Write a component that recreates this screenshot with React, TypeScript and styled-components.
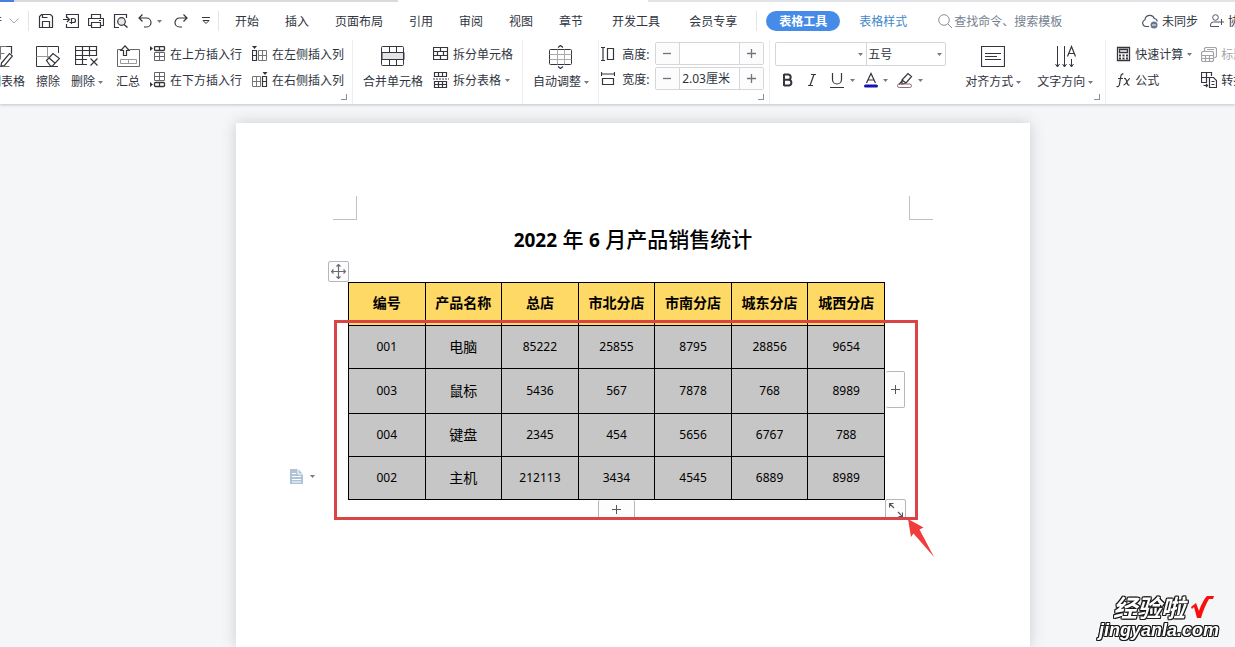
import React from "react";
import styled, { createGlobalStyle, css } from "styled-components";

const ink = "#34353d";
const line = "#d4d6da";
const red = "#db4446";

const GlobalStyle = createGlobalStyle`
  *, *::before, *::after { box-sizing: border-box; }
  html, body { margin: 0; }
  body {
    font-family: "Noto Sans", "Noto Sans CJK SC", sans-serif;
    font-size: 12px;
    line-height: 20px;
    color: #2f3440;
    background: #f5f6f8;
  }
  button, input, select { font: inherit; color: inherit; margin: 0; }
  button {
    padding: 0;
    border: 0;
    background: none;
    cursor: pointer;
  }
  svg { display: block; flex: none; }
`;

const Shell = styled.div`
  display: flex;
  flex-direction: column;
  height: 100vh;
  overflow: hidden;
`;

/* ---------- top chrome ---------- */

const Header = styled.header`
  position: relative;
  z-index: 1;
  flex: none;
  background: #fff;
  box-shadow: 0 1px 3px rgba(60, 64, 72, 0.28);
`;

const TabStrip = styled.div`
  display: flex;
  height: 2px;
`;

const StripPart = styled.span<{ $tone: string; $width?: number }>`
  background: ${(p) => p.$tone};
  ${(p) => (p.$width ? `flex: 0 0 ${p.$width}px;` : "flex: 1;")}
`;

const MenuBar = styled.nav`
  display: flex;
  align-items: center;
  height: 38px;
  white-space: nowrap;
  overflow: hidden;
`;

const MenuSection = styled.div<{ $gap: number; $left?: number; $right?: number }>`
  display: flex;
  flex: none;
  align-items: center;
  gap: ${(p) => p.$gap}px;
  padding: 0 ${(p) => p.$right ?? 0}px 0 ${(p) => p.$left ?? 0}px;
`;

const Rule = styled.span`
  flex: none;
  width: 1px;
  height: 20px;
  background: #e2e4e8;
`;

const FileMenu = styled.button`
  display: flex;
  justify-content: flex-end;
  align-items: center;
  gap: 7px;
  width: 19px;
  overflow: hidden;
  flex: none;
`;

const IconButton = styled.button`
  display: flex;
  align-items: center;
  gap: 5px;
  flex: none;
`;

const MenuItem = styled.button<{ $accent?: boolean }>`
  padding-top: 2px;
  color: ${(p) => (p.$accent ? "#3f87c9" : "#2f3440")};
`;

const ActiveItem = styled.button`
  height: 20px;
  width: 74px;
  padding-top: 1px;
  border-radius: 10px;
  background: #478be8;
  color: #fff;
  font-weight: 700;
  line-height: 19px;
`;

const Search = styled.label`
  display: flex;
  flex: 1;
  align-items: center;
  gap: 2px;
  padding-left: 31px;
`;

const SearchInput = styled.input`
  flex: 1;
  min-width: 0;
  padding: 2px 0 0;
  border: 0;
  outline: 0;
  background: none;
  &::placeholder { color: #75808f; opacity: 1; }
`;

const Account = styled.div`
  display: flex;
  flex: none;
  gap: 12px;
  width: 93px;
  overflow: hidden;
`;

const AccountButton = styled.button`
  display: flex;
  flex: none;
  align-items: center;
  gap: 4px;
  padding-top: 2px;
  svg { margin-bottom: 2px; }
`;

/* ---------- ribbon ---------- */

const Ribbon = styled.div`
  display: flex;
  height: 64px;
  overflow: hidden;
  white-space: nowrap;
`;

const Group = styled.section<{ $gap?: number; $left?: number; $right?: number; $open?: boolean }>`
  position: relative;
  display: flex;
  flex: none;
  align-items: flex-start;
  gap: ${(p) => p.$gap ?? 10}px;
  padding: 2px ${(p) => p.$right ?? 0}px 0 ${(p) => p.$left ?? 0}px;
  ${(p) => !p.$open && css`border-right: 1px solid #eceef1;`}
`;

const Launcher = styled.button`
  position: absolute;
  right: 5px;
  bottom: 4px;
  width: 6px;
  height: 6px;
  border: solid #8b8f98;
  border-width: 0 1px 1px 0;
`;

const TallButton = styled.button`
  display: flex;
  flex: none;
  flex-direction: column;
  align-items: center;
  gap: 3px;
  padding-top: 3px;
`;

const ClipLeft = styled.div`
  display: flex;
  justify-content: flex-end;
  width: 25px;
  overflow: hidden;
`;

const Label = styled.span`
  display: flex;
  align-items: center;
  gap: 3px;
`;

const Stack = styled.div`
  display: flex;
  flex: none;
  flex-direction: column;
`;

const RowButton = styled.button<{ $muted?: boolean }>`
  display: flex;
  align-items: center;
  gap: 4px;
  height: 26px;
  opacity: ${(p) => (p.$muted ? 0.45 : 1)};
  svg { margin-bottom: 2px; }
`;

const SizeGrid = styled.div`
  display: flex;
  flex-direction: column;
  gap: 2px;
`;

const SizeRow = styled.div`
  display: flex;
  align-items: center;
`;

const SizeLabel = styled.label`
  display: flex;
  align-items: center;
  gap: 7px;
  width: 54px;
  padding-top: 2px;
  svg { margin-bottom: 2px; }
`;

const Stepper = styled.div`
  display: flex;
  width: 109px;
  height: 23px;
  border: 1px solid ${line};
  border-radius: 2px;
`;

const StepButton = styled.button`
  display: grid;
  place-items: center;
  width: 23px;
  background: #fcfcfd;
`;

const StepInput = styled.input`
  flex: 1;
  min-width: 0;
  padding: 0 2px;
  border: solid ${line};
  border-width: 0 1px;
  outline: 0;
  background: #fff;
`;

const FontTools = styled.div`
  display: flex;
  flex-direction: column;
  gap: 4px;
  padding-right: 3px;
`;

const SelectRow = styled.div`
  display: flex;
  border: 1px solid ${line};
  border-radius: 2px;
`;

const SelectBox = styled.div<{ $width: number; $divided?: boolean }>`
  position: relative;
  width: ${(p) => p.$width}px;
  ${(p) => p.$divided && css`border-left: 1px solid ${line};`}
  svg {
    position: absolute;
    right: 3px;
    top: 10px;
    pointer-events: none;
  }
`;

const Select = styled.select`
  appearance: none;
  display: block;
  width: 100%;
  height: 22px;
  padding: 2px 12px 0 1px;
  border: 0;
  outline: 0;
  background: none;
`;

const FormatRow = styled.div`
  display: flex;
  align-items: center;
  gap: 9px;
  height: 20px;
  padding-left: 6px;
`;

const FormatLetter = styled.button`
  width: 15px;
  height: 20px;
`;

/* ---------- document ---------- */

const Workspace = styled.main`
  display: flex;
  flex: 1;
  justify-content: center;
  min-height: 0;
  padding: 19px 0 0 31px;
`;

const Paper = styled.article`
  width: 794px;
  flex: none;
  padding-top: 73px;
  background: #fff;
  box-shadow: 0 0 14px rgba(60, 66, 76, 0.22);
`;

const Margins = styled.div`
  display: flex;
  justify-content: space-between;
  padding: 0 97px;
`;

const MarginMark = styled.span<{ $side: "left" | "right" }>`
  width: 24px;
  height: 24px;
  border-bottom: 1px solid #bfc1c5;
  border-${(p) => (p.$side === "left" ? "right" : "left")}: 1px solid #bfc1c5;
`;

const Title = styled.h1`
  margin: 0 0 23px;
  font-size: 21px;
  line-height: 38px;
  font-weight: 500;
  text-align: center;
  color: #000;
`;

const Digits = styled.span`
  font-size: 19px;
  font-weight: 700;
`;

const TableFrame = styled.div`
  position: relative;
  width: 537px;
  margin-left: 112px;
`;

const Table = styled.table`
  width: 100%;
  table-layout: fixed;
  border-collapse: collapse;
  color: #000;
  text-align: center;
`;

const Row = styled.tr<{ $height: number }>`
  height: ${(p) => p.$height}px;
`;

const HeadCell = styled.th`
  padding: 0 0 2px;
  border: 1px solid #000;
  background: #ffd966;
  font-size: 14px;
  font-weight: 700;
`;

const Cell = styled.td<{ $text?: boolean }>`
  padding: 0;
  border: 1px solid #000;
  background: #c6c6c6;
  font-size: ${(p) => (p.$text ? 14 : 12)}px;
`;

const Floating = styled.button<{ $x: number; $y: number; $w: number; $h: number; $edge?: string }>`
  position: absolute;
  left: ${(p) => p.$x}px;
  top: ${(p) => p.$y}px;
  display: grid;
  place-items: center;
  width: ${(p) => p.$w}px;
  height: ${(p) => p.$h}px;
  border: solid #b4b7bc;
  border-width: ${(p) => p.$edge ?? "1px"};
  border-radius: 2px;
  background: #fdfdfd;
`;

const PasteHint = styled.button`
  position: absolute;
  left: -58px;
  top: 187px;
  display: flex;
  align-items: center;
  gap: 6px;
`;

const Highlight = styled.div`
  position: absolute;
  left: -14px;
  top: 38px;
  width: 584px;
  height: 200px;
  border: 3px solid ${red};
  pointer-events: none;
`;

const Pointer = styled.svg`
  position: absolute;
  left: 559px;
  top: 236px;
  pointer-events: none;
`;

const Watermark = styled.aside`
  position: fixed;
  right: 16px;
  bottom: 6px;
  z-index: 2;
  display: flex;
  flex-direction: column;
  align-items: flex-end;
  color: #fff;
  font-style: italic;
  font-weight: 700;
  text-shadow:
    1px 0 #1a1a1a, -1px 0 #1a1a1a, 0 1px #1a1a1a, 0 -1px #1a1a1a,
    1px 1px #1a1a1a, -1px -1px #1a1a1a, 1px -1px #1a1a1a, -1px 1px #1a1a1a;
`;

const MarkName = styled.div`
  display: flex;
  align-items: center;
  gap: 5px;
  padding-right: 5px;
  font-family: "Noto Sans CJK SC", sans-serif;
  font-size: 24px;
  line-height: 22px;
`;

const MarkSite = styled.div`
  font-family: "Liberation Sans", sans-serif;
  font-size: 18px;
  line-height: 22px;
`;

/* ---------- icons ---------- */

type IconProps = { w?: number; h?: number; color?: string; children: React.ReactNode };

const Icon = ({ w = 16, h = 16, color = ink, children }: IconProps) => (
  <svg width={w} height={h} viewBox={`0 0 ${w} ${h}`} fill="none" stroke={color} strokeWidth={1} aria-hidden="true">
    {children}
  </svg>
);

const Caret = () => (
  <svg width="5" height="3" viewBox="0 0 5 3" aria-hidden="true">
    <path d="M0 0h5L2.5 3z" fill="#777b84" />
  </svg>
);

const SaveIcon = () => (
  <Icon>
    <path d="M2.5 14.5h-1v-11l2-2h9l2 2v11h-12M4.500 14.500v-6h7v6M4.500 1.500v3h5" strokeWidth={1.200} />
  </Icon>
);
const ExportIcon = () => (
  <Icon>
    <path d="M3.500 5V1.500h12v13h-12V11M0 6.500h6M4 4l2.500 2.500L4 9M8.500 11V5.500h2a2 2 0 0 1 0 4h-4" strokeWidth={1.200} />
  </Icon>
);
const PrintIcon = () => (
  <Icon>
    <path d="M3.500 5.500v-4h9v4M3.500 12.500h-3v-7h15v7h-3M3.500 9.500h9v5h-9zM11 7.500h2" strokeWidth={1.200} />
  </Icon>
);
const PreviewIcon = () => (
  <Icon>
    <path d="M6 14.500H1.500v-13h12V5" strokeWidth={1.200} />
    <circle cx="8.500" cy="8.500" r="3.800" fill="#e6e8ea" strokeWidth={1.200} />
    <path d="M11 11.500l3.500 3" strokeWidth={1.500} />
  </Icon>
);
const UndoIcon = () => (
  <Icon w={14}>
    <path d="M4.500 1.500L1 5l3.500 3.500M1 5h7.500a4.500 4.500 0 0 1 0 9H6" strokeWidth={1.200} />
  </Icon>
);
const RedoIcon = () => (
  <Icon w={14}>
    <path d="M9.500 1.500L13 5 9.500 8.500M13 5H5.500a4.500 4.500 0 0 0 0 9H8" strokeWidth={1.200} />
  </Icon>
);
const MoreIcon = () => (
  <Icon w={8} h={8}>
    <path d="M0 .5h8M1 3.500h6L4 6.500z" />
  </Icon>
);
const SearchIcon = () => (
  <Icon w={14} h={14} color="#8a8e97">
    <circle cx="6" cy="6" r="5.300" />
    <path d="M10 10l4 4" />
  </Icon>
);
const CloudIcon = () => (
  <Icon color="#4d5564">
    <path d="M7 13.500H4A3.500 3.500 0 0 1 3 6.700 4.800 4.800 0 0 1 12.300 5.500 3.500 3.500 0 0 1 15.300 8.500" strokeWidth={1.200} />
    <circle cx="12" cy="12" r="3.500" fill="#68758c" stroke="none" />
    <path d="M10 12h4" stroke="#fff" />
  </Icon>
);
const InviteIcon = () => (
  <Icon w={14} h={14} color="#4d5564">
    <circle cx="5.500" cy="3.500" r="2.800" />
    <path d="M9 12.500H.5V11a3 3 0 0 1 3-3h4a3 3 0 0 1 1.500.5M11.500 5v6M8.500 8h5.500" />
  </Icon>
);

const DrawTableIcon = () => (
  <Icon w={24} h={24}>
    <path d="M.5 1.500h22v7M.5 8.500h15M11.500 1.500v13M.5 21.500h20" stroke="#777" />
    <path d="M22.500 8.500v-7h-5M12.500 18l8-9.500 3 2.500-8 9.500-3.500.5z" strokeWidth={1.200} />
  </Icon>
);
const EraseIcon = () => (
  <Icon w={24} h={24}>
    <path d="M22.500 8V1.500H.5v20H13" />
    <path d="M.5 11.500H13M11.500 1.500V13" stroke="#999" />
    <path d="M10.500 15.500l6.500-7 6.500 5-7 7.500h-2zM13 13l6.500 5.500" strokeWidth={1.200} />
    <path d="M13 21.500h9" />
  </Icon>
);
const DeleteIcon = () => (
  <Icon w={24} h={24}>
    <path d="M12 19.500H.5v-18h21v9H.5M7.500 1.500v18M14.500 1.500v10M.5 5.500h21M.5 14.500H12" strokeWidth={1.200} />
    <path d="M15.500 13.500l7 7M22.500 13.500l-7 7" strokeWidth={1.200} />
  </Icon>
);
const SumIcon = () => (
  <Icon w={24} h={24}>
    <path d="M5.500 4.500h-4v17h22v-17h-10" stroke="#666" />
    <path d="M9 .8L4.800 5.500h2.700v5h3v-5h2.700z" strokeWidth={1.200} />
    <path d="M4.500 14.500h16v4h-16zM12.500 14.500v4" stroke="#999" />
  </Icon>
);
const RowAboveIcon = () => (
  <Icon>
    <path d="M0 0l3 2.500L0 5z" fill={ink} stroke="none" />
    <rect x="4.500" y=".5" width="10" height="4" rx="1" strokeWidth={1.300} />
    <path d="M9.500.5v4" strokeWidth={1.200} />
    <path d="M4.500 6.500h10v8h-10zM9.500 6.500v8M4.500 10.500h10" stroke="#666" />
  </Icon>
);
const RowBelowIcon = () => (
  <Icon>
    <path d="M0 10l3 2.500L0 15z" fill={ink} stroke="none" />
    <rect x="4.500" y="10.500" width="10" height="4" rx="1" strokeWidth={1.300} />
    <path d="M9.500 10.500v4" strokeWidth={1.200} />
    <path d="M4.500.5h10v8h-10zM9.500.5v8M4.500 4.500h10" stroke="#666" />
  </Icon>
);
const ColLeftIcon = () => (
  <Icon>
    <path d="M0 0h5L2.500 3z" fill={ink} stroke="none" />
    <path d="M.5 4.500h4v10h-4zM.5 9.500h4" strokeWidth={1.200} />
    <path d="M6.500 4.500h8v10h-8zM10.500 4.500v10M6.500 9.500h8" stroke="#777" />
  </Icon>
);
const ColRightIcon = () => (
  <Icon>
    <path d="M10.500 0h5L13 3z" fill={ink} stroke="none" />
    <path d="M10.500 4.500h4v10h-4zM10.500 9.500h4" strokeWidth={1.200} />
    <path d="M.5 4.500h8v10h-8zM4.500 4.500v10M.5 9.500h8" stroke="#777" />
  </Icon>
);
const MergeIcon = () => (
  <Icon w={24} h={24}>
    <path d="M1 7.500h22v7H1z" fill="#e3e4e6" />
    <rect x=".5" y="1.500" width="22" height="19" rx="1" />
    <path d="M8.500 1.500v6M15.500 1.500v6M8.500 14.500v6M15.500 14.500v6" />
  </Icon>
);
const SplitCellsIcon = () => (
  <Icon>
    <path d="M.5 1.500h14v12H.5zM.5 5.500h14M.5 9.500h14M7.500 1.500v4M4.500 5.500v4M10.500 5.500v4M7.500 9.500v4" strokeWidth={1.200} />
  </Icon>
);
const SplitTableIcon = () => (
  <Icon>
    <path d="M1.500 4.500v-4h12v4zM5.500.5v4M9.500.5v4M1.500 15.500v-6h12v6zM1.500 12.500h12M5.500 9.500v6M9.500 9.500v6" strokeWidth={1.200} />
    <path d="M0 7h16" strokeDasharray="2 1" />
  </Icon>
);
const AutoFitIcon = () => (
  <Icon w={24} h={24}>
    <rect x=".5" y="4.500" width="22" height="15" rx="1" />
    <path d="M.5 9.500h22M.5 14.500h22M8.500 4.500v15M15.500 4.500v15" stroke="#aaa" />
    <path d="M9 2.500L11.500.5 14 2.500M9 21.500l2.500 2 2.500-2" strokeWidth={1.200} />
  </Icon>
);
const HeightIcon = () => (
  <Icon w={14}>
    <path d="M0 1.500h4M0 14.500h4M2 1.500v13M6.500 2.500h6v11h-6z" strokeWidth={1.200} />
  </Icon>
);
const WidthIcon = () => (
  <Icon w={14}>
    <path d="M.5 1v4M13.500 1v4M.5 3h13M1.500 7.500h11v6h-11z" strokeWidth={1.200} />
  </Icon>
);
const MinusIcon = () => (
  <Icon w={9} h={9} color="#70747c">
    <path d="M0 4.500h8" strokeWidth={1.300} />
  </Icon>
);
const PlusIcon = () => (
  <Icon w={9} h={9} color="#70747c">
    <path d="M0 4.500h9M4.500 0v9" strokeWidth={1.300} />
  </Icon>
);
const BoldIcon = () => (
  <Icon w={14}>
    <path d="M3 2v12M3 2.500h4.500a2.700 2.700 0 0 1 0 5.300H3M3 7.800h5a2.900 2.900 0 0 1 0 5.700H3" strokeWidth={2} />
  </Icon>
);
const ItalicIcon = () => (
  <Icon w={14}>
    <path d="M6 2.500h5M3 13.500h5M9 2.500l-4 11" strokeWidth={1.200} />
  </Icon>
);
const UnderlineIcon = () => (
  <Icon>
    <path d="M3.500 1v6.500a4.500 4.500 0 0 0 9 0V1M1 15.500h14" strokeWidth={1.200} />
  </Icon>
);
const FontColorIcon = () => (
  <Icon w={14}>
    <path d="M2.500 11L7 1.500 11.500 11M4 8h6" strokeWidth={1.200} />
    <path d="M1.500 14h11" stroke="#1414b4" strokeWidth={3} strokeLinecap="round" />
  </Icon>
);
const MarkerIcon = () => (
  <Icon>
    <path d="M5 8l6-6.500 3.500 3L9 11l-4 1zM5 8l4 3M5 9l-3 3.500" strokeWidth={1.200} />
    <rect x=".5" y="12" width="14" height="3.500" rx="1.700" stroke="#8a6f72" />
  </Icon>
);
const AlignIcon = () => (
  <Icon w={24} h={24}>
    <path d="M.5 1.500h23v20H.5z" strokeWidth={1.200} />
    <path d="M4 8.500h16M4 11.500h12M4 14.500h16" />
  </Icon>
);
const DirectionIcon = () => (
  <Icon w={24} h={24}>
    <path d="M4.500 1v20M11.500 1v20M18.500 14v7M2.500 19l2 3 2-3M9.500 19l2 3 2-3M16.500 19l2 3 2-3" />
    <path d="M14.500 11.500l4-10 4 10M16 8.500h5" strokeWidth={1.200} />
  </Icon>
);
const CalculatorIcon = () => (
  <Icon w={15}>
    <path d="M1.500 1.500h12v13h-12zM3.500 3.500h8v3h-8z" strokeWidth={1.300} />
    <path d="M3 9.500h9M3 12.500h9" strokeWidth={2} strokeDasharray="2 1.500" />
  </Icon>
);
const FormulaIcon = () => (
  <Icon w={15}>
    <path d="M7.500 2C5.500 1.500 5 3 4.700 5L3.500 12c-.3 2-1 3-3 2.500M2 6.500h5M8 6.500c2-.5 2.500 2 3 4s1 3 2.500 2.500M14 6.500c-2 0-4 6.500-6.500 6.500" strokeWidth={1.200} />
  </Icon>
);
const TitleRowIcon = () => (
  <Icon>
    <path d="M3.500 5.500v-3l1-1h10l1 1v8l-1 1h-1M1.500 5.500h10l1 1v8l-1 1h-10l-1-1v-8zM.5 9.500h12M.5 12.500h12M4.500 9.500v6M8.500 9.500v6M6 3.500h7" strokeWidth={1.200} />
  </Icon>
);
const ConvertIcon = () => (
  <Icon>
    <path d="M6 10.500H.5v-10h10V4M.5 5.500H8M5.500.5v10M8.500 5.500h4l3 3v7h-7zM10.500 9.500h3M10.500 12.500h3M2.500 13.500h4M5 12l1.500 1.500L5 15" strokeWidth={1.200} />
  </Icon>
);
const MoveIcon = () => (
  <Icon w={15} h={15} color="#6a6d73">
    <path d="M7.500 .5v14M.5 7.500h14M5.500 2.500l2-2 2 2M5.500 12.500l2 2 2-2M2.500 5.500l-2 2 2 2M12.500 5.500l2 2-2 2" strokeWidth={1.200} />
  </Icon>
);
const ThinPlus = () => (
  <Icon w={9} h={9} color="#54575c">
    <path d="M0 4.500h9M4.500 0v9" />
  </Icon>
);
const ResizeIcon = () => (
  <Icon w={14} h={14} color="#54575c">
    <path d="M.5 4.500v-4h4M.5.5l4.500 4.500M13.500 9.500v4h-4M13.500 13.500L9 9" strokeWidth={1.200} />
  </Icon>
);
const NoteIcon = () => (
  <svg width="14" height="15" viewBox="0 0 14 15" aria-hidden="true">
    <path d="M0 0h8l5 5v10H0z" fill="#afc3d8" />
    <path d="M8 0v5h5M2 4.500h4M2 7.500h9M2 10.500h9M2 13h9" stroke="#fff" fill="none" />
  </svg>
);

/* ---------- data ---------- */

const mainMenu = ["开始", "插入", "页面布局", "引用", "审阅", "视图", "章节"];
const extraMenu = ["开发工具", "会员专享"];
const columns = ["编号", "产品名称", "总店", "市北分店", "市南分店", "城东分店", "城西分店"];
const rows = [
  { height: 43, cells: ["001", "电脑", "85222", "25855", "8795", "28856", "9654"] },
  { height: 45, cells: ["003", "鼠标", "5436", "567", "7878", "768", "8989"] },
  { height: 43, cells: ["004", "键盘", "2345", "454", "5656", "6767", "788"] },
  { height: 43, cells: ["002", "主机", "212113", "3434", "4545", "6889", "8989"] },
];

type TallProps = { icon: React.ReactNode; text: string; menu?: boolean };

const Tall = ({ icon, text, menu }: TallProps) => (
  <TallButton>
    {icon}
    <Label>
      {text}
      {menu && <Caret />}
    </Label>
  </TallButton>
);

type SizeFieldProps = { id: string; icon: React.ReactNode; label: string; value: string };

const SizeField = ({ id, icon, label, value }: SizeFieldProps) => (
  <SizeRow>
    <SizeLabel htmlFor={id}>
      {icon}
      {label}
    </SizeLabel>
    <Stepper>
      <StepButton aria-label={`${label} -`}><MinusIcon /></StepButton>
      <StepInput id={id} defaultValue={value} />
      <StepButton aria-label={`${label} +`}><PlusIcon /></StepButton>
    </Stepper>
  </SizeRow>
);

export default function App() {
  return (
    <Shell>
      <GlobalStyle />
      <Header>
        <TabStrip>
          <StripPart $tone="#4a7fe0" $width={14} />
          <StripPart $tone="#d9dadd" $width={384} />
          <StripPart $tone="#ffffff" $width={250} />
          <StripPart $tone="#e2e3e6" />
        </TabStrip>

        <MenuBar>
          <MenuSection $gap={9}>
            <FileMenu aria-label="文件">
              <span>文件</span>
              <Icon w={10} h={6} color="#a3a6ad"><path d="M.5.500L5 5 9.500.500" /></Icon>
            </FileMenu>
            <Rule />
          </MenuSection>
          <MenuSection $gap={9} $left={9} $right={9}>
            <IconButton aria-label="保存"><SaveIcon /></IconButton>
            <IconButton aria-label="输出为PDF"><ExportIcon /></IconButton>
            <IconButton aria-label="打印"><PrintIcon /></IconButton>
            <IconButton aria-label="打印预览"><PreviewIcon /></IconButton>
          </MenuSection>
          <MenuSection $gap={12} $right={8}>
            <IconButton aria-label="撤销"><UndoIcon /><Caret /></IconButton>
            <IconButton aria-label="恢复"><RedoIcon /></IconButton>
          </MenuSection>
          <MenuSection $gap={8} $left={6}>
            <IconButton aria-label="更多"><MoreIcon /></IconButton>
            <Rule />
          </MenuSection>
          <MenuSection $gap={26} $left={16}>
            {mainMenu.map((m) => <MenuItem key={m}>{m}</MenuItem>)}
          </MenuSection>
          <MenuSection $gap={29} $left={29} $right={19}>
            {extraMenu.map((m) => <MenuItem key={m}>{m}</MenuItem>)}
          </MenuSection>
          <Rule />
          <MenuSection $gap={19} $left={9}>
            <ActiveItem>表格工具</ActiveItem>
            <MenuItem $accent>表格样式</MenuItem>
          </MenuSection>
          <Search>
            <SearchIcon />
            <SearchInput type="text" placeholder="查找命令、搜索模板" aria-label="查找命令、搜索模板" />
          </Search>
          <Account>
            <AccountButton><CloudIcon />未同步</AccountButton>
            <AccountButton><InviteIcon />协作</AccountButton>
          </Account>
        </MenuBar>

        <Ribbon>
          <Group $gap={11} $open>
            <ClipLeft><Tall icon={<DrawTableIcon />} text="绘制表格" /></ClipLeft>
            <Tall icon={<EraseIcon />} text="擦除" />
            <Tall icon={<DeleteIcon />} text="删除" menu />
          </Group>
          <Group $gap={10} $left={13} $right={8}>
            <Tall icon={<SumIcon />} text="汇总" />
            <Stack>
              <RowButton><RowAboveIcon />在上方插入行</RowButton>
              <RowButton><RowBelowIcon />在下方插入行</RowButton>
            </Stack>
            <Stack>
              <RowButton><ColLeftIcon />在左侧插入列</RowButton>
              <RowButton><ColRightIcon />在右侧插入列</RowButton>
            </Stack>
            <Launcher aria-label="表格属性" />
          </Group>
          <Group $left={10} $right={9}>
            <Tall icon={<MergeIcon />} text="合并单元格" />
            <Stack>
              <RowButton><SplitCellsIcon />拆分单元格</RowButton>
              <RowButton><SplitTableIcon />拆分表格<Caret /></RowButton>
            </Stack>
          </Group>
          <Group $left={10} $right={9}>
            <Tall icon={<AutoFitIcon />} text="自动调整" menu />
          </Group>
          <Group $left={2} $right={5}>
            <SizeGrid>
              <SizeField id="row-height" icon={<HeightIcon />} label="高度:" value="" />
              <SizeField id="col-width" icon={<WidthIcon />} label="宽度:" value="2.03厘米" />
            </SizeGrid>
            <Launcher aria-label="单元格大小" />
          </Group>
          <Group $gap={16} $left={5} $right={12}>
            <FontTools>
              <SelectRow>
                <SelectBox $width={90}>
                  <Select aria-label="字体" defaultValue=""><option value="" /></Select>
                  <Caret />
                </SelectBox>
                <SelectBox $width={79} $divided>
                  <Select aria-label="字号" defaultValue="五号"><option>五号</option></Select>
                  <Caret />
                </SelectBox>
              </SelectRow>
              <FormatRow>
                <FormatLetter aria-label="加粗"><BoldIcon /></FormatLetter>
                <FormatLetter aria-label="倾斜"><ItalicIcon /></FormatLetter>
                <IconButton aria-label="下划线"><UnderlineIcon /><Caret /></IconButton>
                <IconButton aria-label="字体颜色"><FontColorIcon /><Caret /></IconButton>
                <IconButton aria-label="突出显示"><MarkerIcon /><Caret /></IconButton>
              </FormatRow>
            </FontTools>
            <Tall icon={<AlignIcon />} text="对齐方式" menu />
            <Tall icon={<DirectionIcon />} text="文字方向" menu />
            <Launcher aria-label="对齐" />
          </Group>
          <Group $gap={9} $left={10} $open>
            <Stack>
              <RowButton><CalculatorIcon />快速计算<Caret /></RowButton>
              <RowButton><FormulaIcon />公式</RowButton>
            </Stack>
            <Stack>
              <RowButton $muted><TitleRowIcon />标题行重复</RowButton>
              <RowButton><ConvertIcon />转换成文本</RowButton>
            </Stack>
          </Group>
        </Ribbon>
      </Header>

      <Workspace>
        <Paper>
          <Margins>
            <MarginMark $side="left" />
            <MarginMark $side="right" />
          </Margins>
          <Title>
            <Digits>2022</Digits> 年 <Digits>6</Digits> 月产品销售统计
          </Title>
          <TableFrame>
            <Table>
              <thead>
                <Row $height={43}>
                  {columns.map((c) => <HeadCell key={c} scope="col">{c}</HeadCell>)}
                </Row>
              </thead>
              <tbody>
                {rows.map((r) => (
                  <Row key={r.cells[0]} $height={r.height}>
                    {r.cells.map((c, i) => <Cell key={i} $text={i === 1}>{c}</Cell>)}
                  </Row>
                ))}
              </tbody>
            </Table>
            <Floating $x={-20} $y={-21} $w={21} $h={21} aria-label="移动表格"><MoveIcon /></Floating>
            <Floating $x={538} $y={89} $w={19} $h={37} $edge="1px 1px 1px 0" aria-label="添加列"><ThinPlus /></Floating>
            <Floating $x={250} $y={218} $w={37} $h={19} $edge="0 1px" aria-label="添加行"><ThinPlus /></Floating>
            <Floating $x={537} $y={217} $w={21} $h={21} aria-label="缩放表格"><ResizeIcon /></Floating>
            <PasteHint aria-label="段落布局"><NoteIcon /><Caret /></PasteHint>
            <Highlight />
            <Pointer width="28" height="40" viewBox="0 0 28 40" aria-hidden="true">
              <path d="M1 1l15.500 8.500-4 2L27 39 6.500 15.500 4 19z" fill="#f23c3c" />
            </Pointer>
          </TableFrame>
        </Paper>
      </Workspace>

      <Watermark>
        <MarkName>
          经验啦
          <svg width="24" height="24" viewBox="0 0 24 24" aria-hidden="true">
            <path d="M1 12l5-4 3 8C11 10 14 4 17 1h7l-1 3h-4C16 9 13 16 11 23H7L4 12l-2 2z" fill="#fb0d0d" />
          </svg>
        </MarkName>
        <MarkSite>jingyanla.com</MarkSite>
      </Watermark>
    </Shell>
  );
}
